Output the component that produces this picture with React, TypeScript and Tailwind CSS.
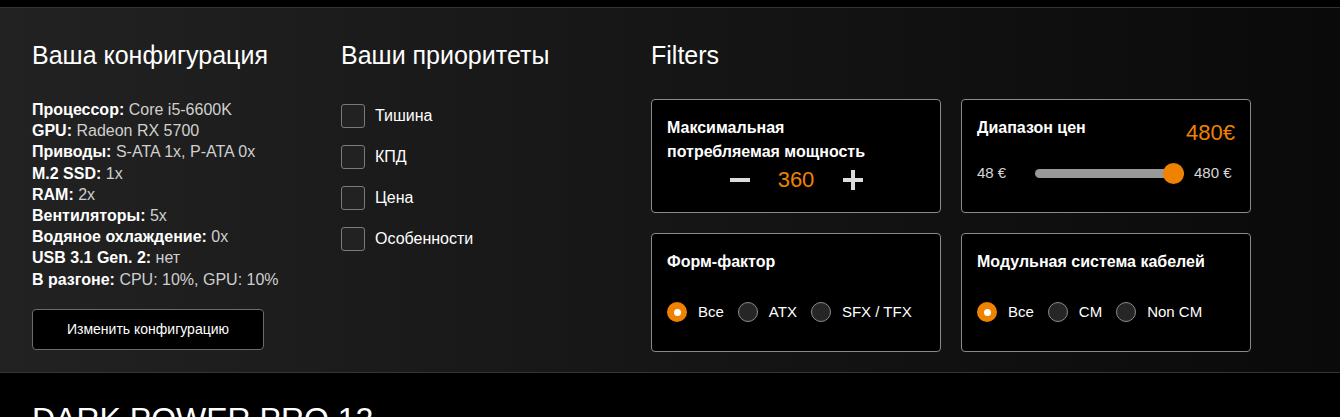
import React, { useState } from 'react';

const specs: [string, string][] = [
  ['Процессор:', 'Core i5-6600K'],
  ['GPU:', 'Radeon RX 5700'],
  ['Приводы:', 'S-ATA 1x, P-ATA 0x'],
  ['M.2 SSD:', '1x'],
  ['RAM:', '2x'],
  ['Вентиляторы:', '5x'],
  ['Водяное охлаждение:', '0x'],
  ['USB 3.1 Gen. 2:', 'нет'],
  ['В разгоне:', 'CPU: 10%, GPU: 10%'],
];

const priorities = ['Тишина', 'КПД', 'Цена', 'Особенности'];

const Radio: React.FC<{ label: string; checked: boolean; onClick: () => void }> = ({ label, checked, onClick }) => (
  <button onClick={onClick} className="flex items-center gap-[11px] text-[15px] text-white">
    {checked ? (
      <span className="w-[20px] h-[20px] rounded-full bg-[#ef8200] flex items-center justify-center">
        <span className="w-[7px] h-[7px] rounded-full bg-white" />
      </span>
    ) : (
      <span className="w-[20px] h-[20px] rounded-full bg-[#262626] border border-[#8a8a8a]" />
    )}
    <span>{label}</span>
  </button>
);

const App: React.FC = () => {
  const [checked, setChecked] = useState<string[]>([]);
  const [power, setPower] = useState(360);
  const [form, setForm] = useState('Все');
  const [cable, setCable] = useState('Все');

  const toggle = (p: string) =>
    setChecked(prev => (prev.includes(p) ? prev.filter(x => x !== p) : [...prev, p]));

  return (
    <div className="w-[1340px] h-[417px] bg-black overflow-hidden" style={{ fontFamily: '"Liberation Sans", Arial, sans-serif' }}>
      <div className="h-[7px] bg-black" />
      <section className="h-[366px] border-t border-b border-[#343434] bg-gradient-to-r from-[#222222] to-[#0a0a0a] flex px-[32px] pt-[32px]">
        {/* config */}
        <div className="w-[309px] shrink-0">
          <h2 className="text-[25px] leading-[30px] text-white font-light">Ваша конфигурация</h2>
          <ul className="mt-[29px] text-[16px] leading-[21.2px]">
            {specs.map(([k, v]) => (
              <li key={k}>
                <span className="font-bold text-white">{k}</span>{' '}
                <span className="text-[#cfcfcf]">{v}</span>
              </li>
            ))}
          </ul>
          <button className="mt-[19px] w-[232px] h-[41px] bg-black border border-[#6b6b6b] rounded-[4px] text-white text-[14px]">
            Изменить конфигурацию
          </button>
        </div>

        {/* priorities */}
        <div className="w-[310px] shrink-0">
          <h2 className="text-[25px] leading-[30px] text-white font-light">Ваши приоритеты</h2>
          <div className="mt-[34px] flex flex-col gap-[17px]">
            {priorities.map(p => (
              <label key={p} className="flex items-center gap-[10px] cursor-pointer" onClick={() => toggle(p)}>
                <span className="w-[24px] h-[24px] rounded-[3px] bg-[#222222] border border-[#7a7a7a] flex items-center justify-center text-[#ef8200] text-[14px]">
                  {checked.includes(p) ? '✓' : ''}
                </span>
                <span className="text-[16px] text-white">{p}</span>
              </label>
            ))}
          </div>
        </div>

        {/* filters */}
        <div className="flex-1">
          <h2 className="text-[25px] leading-[30px] text-white font-light">Filters</h2>
          <div className="mt-[29px] grid grid-cols-[290px_290px] gap-x-[20px] gap-y-[20px]">
            <div className="h-[114px] bg-black border border-[#8a8a8a] rounded-[4px] px-[15px] pt-[16px]">
              <div className="text-[16px] leading-[24px] font-bold text-white">
                Максимальная
                <br />
                потребляемая мощность
              </div>
              <div className="flex items-center justify-center gap-[23px] mt-[1px]">
                <button onClick={() => setPower(p => p - 10)} className="w-[22px] h-[22px] flex items-center justify-center">
                  <span className="w-[20px] h-[4px] bg-[#dcdcdc]" />
                </button>
                <span className="text-[22px] leading-[30px] text-[#ef8200] w-[45px] text-center">{power}</span>
                <button onClick={() => setPower(p => p + 10)} className="relative w-[22px] h-[22px] flex items-center justify-center">
                  <span className="absolute w-[20px] h-[4px] bg-[#dcdcdc]" />
                  <span className="absolute w-[4px] h-[20px] bg-[#dcdcdc]" />
                </button>
              </div>
            </div>

            <div className="h-[114px] bg-black border border-[#8a8a8a] rounded-[4px] px-[15px] pt-[16px]">
              <div className="flex items-start justify-between">
                <div className="text-[16px] leading-[24px] font-bold text-white">Диапазон цен</div>
                <div className="text-[22px] leading-[28px] text-[#ef8200] mt-[3px]">480€</div>
              </div>
              <div className="mt-[15px] flex items-center text-[15px] text-[#d8d8d8]">
                <span className="w-[58px]">48 €</span>
                <div className="relative w-[149px] h-[9px] rounded-full bg-[#999999]">
                  <span className="absolute right-0 -top-[6px] w-[21px] h-[21px] rounded-full bg-[#ef8200]" />
                </div>
                <span className="ml-[10px]">480 €</span>
              </div>
            </div>

            <div className="h-[119px] bg-black border border-[#8a8a8a] rounded-[4px] px-[15px] pt-[16px]">
              <div className="text-[16px] leading-[24px] font-bold text-white">Форм-фактор</div>
              <div className="mt-[27px] flex items-center gap-[14px]">
                {['Все', 'ATX', 'SFX / TFX'].map(o => (
                  <Radio key={o} label={o} checked={form === o} onClick={() => setForm(o)} />
                ))}
              </div>
            </div>

            <div className="h-[119px] bg-black border border-[#8a8a8a] rounded-[4px] px-[15px] pt-[16px]">
              <div className="text-[16px] leading-[24px] font-bold text-white">Модульная система кабелей</div>
              <div className="mt-[27px] flex items-center gap-[14px]">
                {['Все', 'CM', 'Non CM'].map(o => (
                  <Radio key={o} label={o} checked={cable === o} onClick={() => setCable(o)} />
                ))}
              </div>
            </div>
          </div>
        </div>
      </section>
      <div className="px-[32px] pt-[28px]">
        <h1 className="text-[32px] leading-[36px] text-white font-light">DARK POWER PRO 12</h1>
      </div>
    </div>
  );
};

export default App;
